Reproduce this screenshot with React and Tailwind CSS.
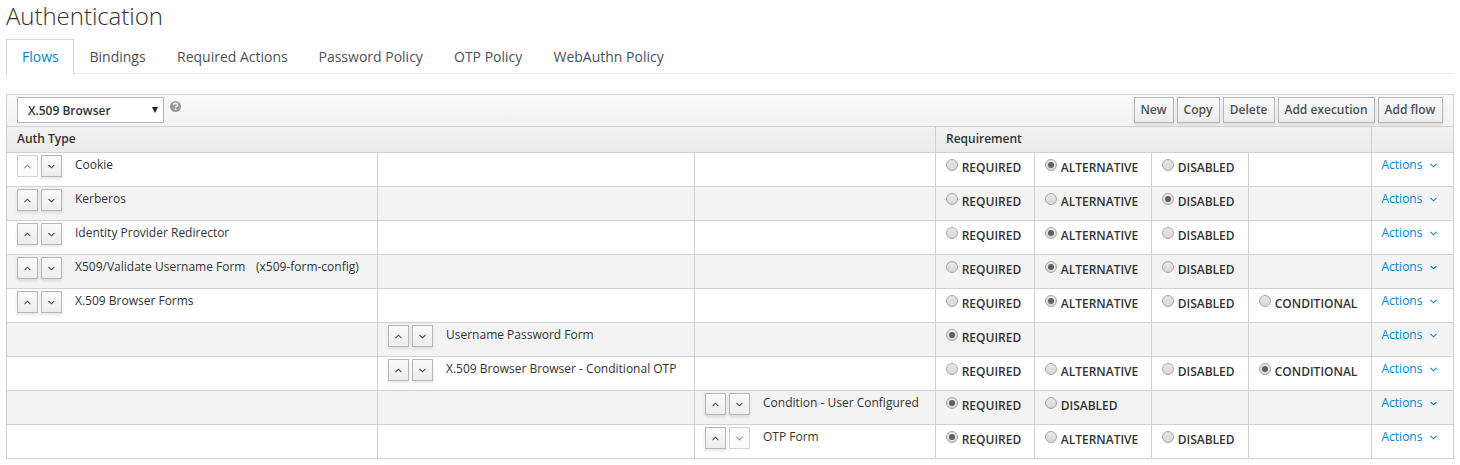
const TABS = [
  ["Flows", "w-[68px]"],
  ["Bindings", "w-[87.5px]"],
  ["Required Actions", "w-[141.5px]"],
  ["Password Policy", "w-[135.5px]"],
  ["OTP Policy", "w-[99.5px]"],
  ["WebAuthn Policy", "w-[142px]"],
];

const TOOLBAR = [
  ["New", "w-[40px]"],
  ["Copy", "w-[43px]"],
  ["Delete", "w-[52px]"],
  ["Add execution", "w-[97px]"],
  ["Add flow", "w-[65px]"],
];

const STANDARD = ["REQUIRED", "ALTERNATIVE", "DISABLED"];
const WITH_CONDITIONAL = [...STANDARD, "CONDITIONAL"];

const ROWS = [
  { name: "Cookie", level: 0, options: STANDARD, selected: "ALTERNATIVE", first: true },
  { name: "Kerberos", level: 0, options: STANDARD, selected: "DISABLED" },
  { name: "Identity Provider Redirector", level: 0, options: STANDARD, selected: "ALTERNATIVE" },
  { name: "X509/Validate Username Form", alias: "(x509-form-config)", level: 0, options: STANDARD, selected: "ALTERNATIVE" },
  { name: "X.509 Browser Forms", level: 0, options: WITH_CONDITIONAL, selected: "ALTERNATIVE" },
  { name: "Username Password Form", level: 1, options: ["REQUIRED"], selected: "REQUIRED" },
  { name: "X.509 Browser Browser - Conditional OTP", level: 1, options: WITH_CONDITIONAL, selected: "CONDITIONAL" },
  { name: "Condition - User Configured", level: 2, options: ["REQUIRED", "DISABLED"], selected: "REQUIRED" },
  { name: "OTP Form", level: 2, options: STANDARD, selected: "REQUIRED", last: true },
];

function Chevron({ up, className }) {
  return (
    <svg viewBox="0 0 7 5" className={`h-[5px] w-[7px] ${className || ""}`} fill="none" stroke="currentColor" strokeWidth="1.1">
      <path d={up ? "M0.5 4.2 3.5 1.2l3 3" : "M0.5 0.8 3.5 3.8l3-3"} />
    </svg>
  );
}

function MoveButton({ up, disabled }) {
  return (
    <button
      className={`flex h-[22px] w-[21px] items-center justify-center border pt-px ${
        disabled
          ? "border-[#d3d3d3] bg-[#fafafa] text-[#969696]"
          : "border-[#b7b7b7] bg-linear-to-b from-[#fafafa] to-[#ededed] text-[#4d5258] shadow-[0_2px_3px_rgba(3,3,3,0.1)]"
      }`}
    >
      <Chevron up={up} />
    </button>
  );
}

function Radio({ label, checked }) {
  return (
    <label className="flex gap-[4px]">
      <svg viewBox="0 0 12 12" className="mt-[6px] h-[12px] w-[12px] shrink-0">
        <defs>
          <linearGradient id="radioFace" x1="0" y1="0" x2="0" y2="1">
            <stop offset="0" stopColor="#e9e9e9" />
            <stop offset="1" stopColor="#d6d6d6" />
          </linearGradient>
        </defs>
        <circle cx="6" cy="6" r="5.5" fill="url(#radioFace)" stroke="#a8a8a8" />
        {checked && <circle cx="6" cy="6" r="3" fill="#606060" />}
      </svg>
      <span className="mt-[5px] ml-[-0.3px] leading-5 font-semibold text-[#333]">{label}</span>
    </label>
  );
}

function Cell({ children }) {
  return <div className="border-b border-l border-[#d1d1d1] pl-[10px]">{children}</div>;
}

const COLUMNS = "grid grid-cols-[371px_317px_241px_99px_117px_97px_123px_82px]";

function FlowRow({ row, striped }) {
  return (
    <div className={`${COLUMNS} h-[34px] ${striped ? "bg-[#f3f3f3]" : "bg-white"}`}>
      {[0, 1, 2].map((level) => (
        <Cell key={level}>
          {row.level === level && (
            <div className="flex whitespace-nowrap">
              <div className="mt-[2px] flex gap-[3px]">
                <MoveButton up disabled={row.first} />
                <MoveButton disabled={row.last} />
              </div>
              <span className="mt-[2px] ml-[13px] leading-5">{row.name}</span>
              {row.alias && <span className="mt-[2px] ml-[10.5px] leading-5">{row.alias}</span>}
            </div>
          )}
        </Cell>
      ))}
      {[0, 1, 2, 3].map((i) => (
        <Cell key={i}>
          {row.options[i] && <Radio label={row.options[i]} checked={row.options[i] === row.selected} />}
        </Cell>
      ))}
      <Cell>
        <a className="ml-[-0.5px] flex items-start pt-[2px] leading-5 text-[#0088ce]">
          Actions
          <Chevron className="mt-[8px] ml-[7.5px]" />
        </a>
      </Cell>
    </div>
  );
}

export default function App() {
  return (
    <div className="h-[465px] w-[1460px] overflow-hidden bg-[#fefefe] pl-[6px] font-['Open_Sans',sans-serif] text-[12px] text-[#333]">
      <h1 className="h-[39px] pt-px text-[24px] leading-[30px] font-light tracking-[-0.04px]">Authentication</h1>

      <nav className="flex h-[35px] w-[1448px] text-[14px] leading-[34px] text-[#4d5258]">
        {TABS.map(([label, width], i) => (
          <a
            key={label}
            className={`${width} shrink-0 whitespace-nowrap ${
              i === 0 ? "border-x border-t border-[#d9d9d9] pl-[15px] text-[#0088ce]" : "border-b border-[#ebebeb] pt-px pl-[15.5px]"
            }`}
          >
            {label}
          </a>
        ))}
        <div className="flex-1 border-b border-[#ebebeb]" />
      </nav>

      <div className="mt-[20px] w-[1448px] border-t border-r border-[#d1d1d1]">
        <div className="bg-linear-to-b from-[#fafafa] to-[#ebebeb]">
          <div className="flex h-[32px] border-b border-l border-[#d1d1d1] pt-[2px] pr-[10px] pl-[10px]">
            <div className="flex h-[26px] w-[147px] items-start justify-between border border-[#b7b7b7] bg-white pr-[5px] pl-[10px] leading-[26px] font-semibold">
              X.509 Browser
              <svg viewBox="0 0 6 6" className="mt-[9px] h-[6px] w-[6px]" fill="#222">
                <path d="M0 0h6L3 6z" />
              </svg>
            </div>
            <svg viewBox="0 0 11 11" className="mt-[4px] ml-[6px] h-[11px] w-[11px]">
              <circle cx="5.5" cy="5.5" r="5.5" fill="#999" />
              <path d="M3.4 4.3c0-2.6 4.1-2.4 4.1-.1 0 1.3-1.9 1.2-1.9 2.3" fill="none" stroke="#fff" strokeWidth="1.6" />
              <path d="M4.8 7.5h1.6V9H4.8z" fill="#fff" />
            </svg>
            <div className="ml-auto flex gap-[3px]">
              {TOOLBAR.map(([label, width]) => (
                <button
                  key={label}
                  className={`${width} flex h-[26px] items-start justify-center border border-[#b7b7b7] bg-linear-to-b from-[#fafafa] to-[#ededed] pr-px leading-[23px] font-semibold whitespace-nowrap text-[#4d5258] shadow-[0_2px_3px_rgba(3,3,3,0.1)]`}
                >
                  {label}
                </button>
              ))}
            </div>
          </div>
          <div className="grid h-[26px] grid-cols-[929px_436px_82px] leading-[23px] font-semibold">
            <Cell>Auth Type</Cell>
            <Cell>Requirement</Cell>
            <Cell />
          </div>
        </div>
        {ROWS.map((row, i) => (
          <FlowRow key={row.name} row={row} striped={i % 2 === 1} />
        ))}
      </div>
    </div>
  );
}
